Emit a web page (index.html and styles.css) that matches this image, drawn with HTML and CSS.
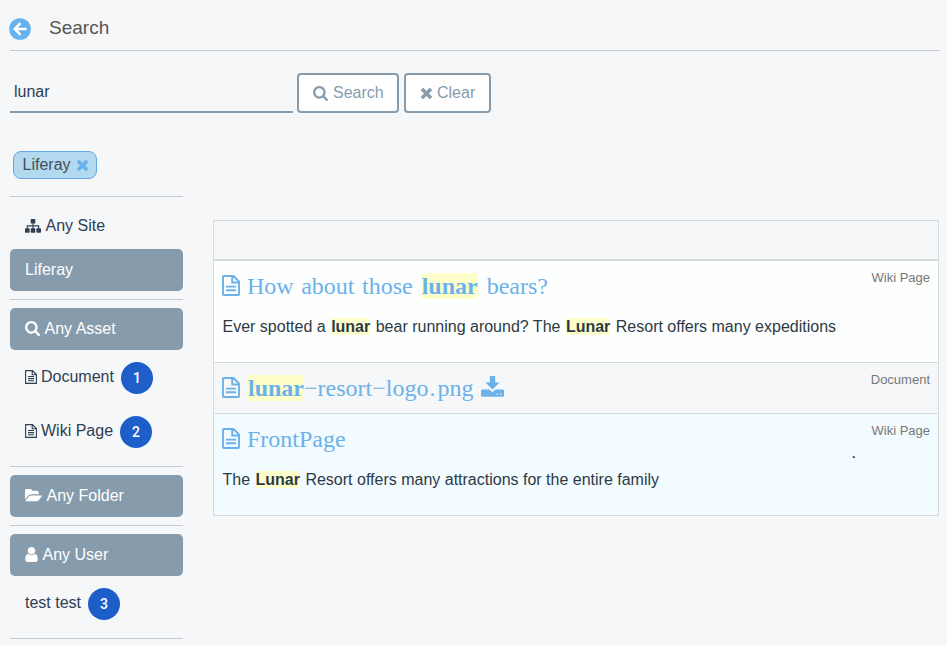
FILE: index.html
```html
<!DOCTYPE html>
<html lang="en">
<head>
<meta charset="utf-8">
<title>Search</title>
<link rel="stylesheet" href="styles.css">
</head>
<body>
<svg class="sprite" width="0" height="0" aria-hidden="true">
  <symbol id="search" viewBox="64 128 1664 1664"><path d="M1216 832q0-185-131.5-316.5t-316.5-131.5-316.5 131.5-131.5 316.5 131.5 316.5 316.5 131.5 316.5-131.5 131.5-316.5zm512 832q0 52-38 90t-90 38q-54 0-90-38l-343-342q-179 124-399 124-143 0-273.500-55.500t-225-150-150-225-55.500-273.500 55.500-273.500 150-225 225-150 273.500-55.500 273.500 55.500 225 150 150 225 55.500 273.500q0 220-124 399l343 343q37 37 37 90z"/></symbol>
  <symbol id="times" viewBox="302 366 1188 1188"><path d="M1490 1322q0 40-28 68l-136 136q-28 28-68 28t-68-28l-294-294-294 294q-28 28-68 28t-68-28l-136-136q-28-28-28-68t28-68l294-294-294-294q-28-28-28-68t28-68l136-136q28-28 68-28t68 28l294 294 294-294q28-28 68-28t68 28l136 136q28 28 28 68t-28 68l-294 294 294 294q28 28 28 68z"/></symbol>
  <symbol id="folder" viewBox="0 256 1880 1280"><path d="M1879 952q0 31-31 66l-336 396q-43 51-120.500 86.500t-143.500 35.500h-1088q-34 0-60.500-13t-26.500-43q0-31 31-66l336-396q43-51 120.500-86.500t143.500-35.500h1088q34 0 60.500 13t26.500 43zm-343-344v160h-832q-94 0-197 47.500t-164 119.500l-337 396-5 6q0-4-.5-12.500t-.5-12.500v-960q0-92 66-158t158-66h320q92 0 158 66t66 158v32h544q92 0 158 66t66 158z"/></symbol>
  <symbol id="user" viewBox="256 128 1280 1536"><path d="M1536 1399q0 109-62.500 187t-150.500 78h-854q-88 0-150.500-78t-62.500-187q0-85 8.500-160.500t31.500-152 58.500-131 94-89 134.500-34.500q131 128 313 128t313-128q76 0 134.500 34.500t94 89 58.500 131 31.500 152 8.500 160.500zm-256-887q0 159-112.500 271.500t-271.500 112.500-271.500-112.500-112.500-271.500 112.500-271.500 271.500-112.500 271.500 112.500 112.500 271.500z"/></symbol>
  <symbol id="file" viewBox="0 0 18 21"><path d="M1.800 1H11.500L17 6.500V19.200Q17 20 16.200 20H1.800Q1 20 1 19.200V1.800Q1 1 1.800 1ZM10.200 1V7.500H17M4 11.600H14M4 15.200H14" fill="none" stroke="currentColor" stroke-width="1.900"/></symbol>
  <symbol id="file-small" viewBox="0 0 12 14"><path d="M.6.600H7.500L11.400 4.500V13.400H.6ZM7.200.600V4.800H11.400M3 6.500H9M3 8.600H9M3 10.700H9" fill="none" stroke="currentColor" stroke-width="1.100"/></symbol>
  <symbol id="sitemap" viewBox="0 0 16 14"><rect x="5.700" y="0" width="4.600" height="4.600" rx=".7"/><rect x="0" y="9.200" width="4.600" height="4.600" rx=".7"/><rect x="5.700" y="9.200" width="4.600" height="4.600" rx=".7"/><rect x="11.400" y="9.200" width="4.600" height="4.600" rx=".7"/><path d="M8 4V10M2.300 10V6.900H13.700V10" fill="none" stroke="currentColor" stroke-width="1.100"/></symbol>
  <symbol id="download" viewBox="0 0 23 21"><path fill-rule="evenodd" d="M9.600 0H13.400Q14.200 0 14.200.8V6.400H18.500L11.500 13.600 4.500 6.400H8.800V.8Q8.800 0 9.600 0ZM1.400 13.400H8.400L11.500 16.200 14.600 13.400H21.600Q23 13.400 23 14.800V19.400Q23 20.800 21.600 20.800H1.400Q0 20.800 0 19.400V14.800Q0 13.400 1.400 13.400ZM15.800 17.400V18.800H17.200V17.400ZM19.200 17.400V18.800H20.600V17.400Z"/></symbol>
</svg>

<header class="page-head">
  <svg class="back" viewBox="0 0 22 22"><circle cx="11" cy="11" r="10.800"/><path d="M11.500 5.200L5.800 11L11.500 16.800M6.200 11H17.600"/></svg>
  <h1>Search</h1>
</header>

<form class="search-bar">
  <div class="query">lunar</div>
  <button type="button" class="btn btn-search"><svg class="i-search"><use href="#search"/></svg><span>Search</span></button>
  <button type="button" class="btn btn-clear"><svg class="i-times"><use href="#times"/></svg><span>Clear</span></button>
</form>

<div class="chip"><span>Liferay</span><svg class="i-times"><use href="#times"/></svg></div>

<main class="columns">
  <aside class="facets">
    <section>
      <div class="facet plain"><svg class="i-sitemap"><use href="#sitemap"/></svg><span>Any Site</span></div>
      <div class="facet active">Liferay</div>
    </section>
    <section>
      <div class="facet active"><svg class="i-search"><use href="#search"/></svg><span>Any Asset</span></div>
      <div class="term"><svg class="i-file-small"><use href="#file-small"/></svg><span>Document</span><b class="badge">1</b></div>
      <div class="term"><svg class="i-file-small"><use href="#file-small"/></svg><span>Wiki Page</span><b class="badge">2</b></div>
    </section>
    <section>
      <div class="facet active"><svg class="i-folder"><use href="#folder"/></svg><span>Any Folder</span></div>
    </section>
    <section>
      <div class="facet active"><svg class="i-user"><use href="#user"/></svg><span>Any User</span></div>
      <div class="term"><span>test test</span><b class="badge">3</b></div>
    </section>
  </aside>

  <div class="results">
    <div class="results-head"></div>
    <article class="result white">
      <div class="body">
        <h2><svg class="i-file"><use href="#file"/></svg><span class="t-bears">How about those <mark>lunar</mark> bears?</span></h2>
        <p>Ever spotted a <mark>lunar</mark> bear running around? The <mark>Lunar</mark> Resort offers many expeditions</p>
      </div>
      <div class="kind">Wiki Page</div>
    </article>
    <article class="result">
      <div class="body">
        <h2><svg class="i-file"><use href="#file"/></svg><span class="t-logo"><mark>lunar</mark>−resort−logo<span class="period">.</span>png</span><svg class="i-download"><use href="#download"/></svg></h2>
      </div>
      <div class="kind">Document</div>
    </article>
    <article class="result blue">
      <div class="body">
        <h2><svg class="i-file"><use href="#file"/></svg><span>FrontPage</span></h2>
        <p>The <mark>Lunar</mark> Resort offers many attractions for the entire family</p>
      </div>
      <div class="kind">Wiki Page<span class="dot">.</span></div>
    </article>
  </div>
</main>
</body>
</html>
```
FILE: styles.css
```css
* { box-sizing: border-box; }
body {
  margin: 0;
  padding: 0 7px 0 10px;
  height: 646px;
  overflow: hidden;
  background: #f5f7f9;
  color: #2f3e52;
  font: 16px/24px "Liberation Sans", Arial, sans-serif;
}
.sprite { position: absolute; }
svg { flex: none; fill: currentColor; display: block; }

.page-head {
  display: flex;
  align-items: center;
  height: 51px;
  padding-top: 5px;
  border-bottom: 1px solid #c5c9cd;
}
.back { width: 22px; height: 22px; margin: 2px 18px 0 -1px; }
.back circle { fill: #65b2ee; }
.back path { fill: none; stroke: #fff; stroke-width: 2.500; }
h1 { margin: 0; font-size: 19px; font-weight: 400; color: #555; }

.search-bar { display: flex; align-items: flex-start; padding-top: 22px; }
.query {
  width: 283px;
  height: 40px;
  margin-right: 4px;
  padding: 7px 4px;
  border-bottom: 2px solid #869cad;
}
.btn {
  display: flex;
  align-items: center;
  height: 40px;
  padding: 0;
  border: 2px solid #869cad;
  border-radius: 4px;
  background: #fff;
  color: #869cad;
  font: inherit;
}
.btn-search { width: 102px; margin-right: 5px; padding-left: 14px; gap: 5px; }
.btn-clear { width: 87px; padding-left: 15px; gap: 5px; }
.i-search { width: 15px; height: 15px; }
.i-times { width: 11px; height: 11px; margin-top: 0; }

.chip {
  display: flex;
  align-items: center;
  gap: 6px;
  width: 84px;
  height: 28px;
  margin: 38px 0 17px 3px;
  padding: 0 0 1px 8.500px;
  border: 1px solid #65a6ea;
  border-radius: 8px;
  background: #b2d9ee;
  color: #434f5b;
}
.chip svg { color: #65b2ee; margin-top: 2px; }

.columns { display: flex; align-items: flex-start; gap: 30px; }
.facets { width: 173px; border-bottom: 1px solid #c5c9cd; }
.facets section { border-top: 1px solid #c5c9cd; padding: 8px 0; }
.facet {
  display: flex;
  align-items: center;
  gap: 4.500px;
  height: 42px;
  padding: 0 15px;
  border-radius: 5px;
  line-height: 22px;
}
.facet.plain { height: 44px; padding-bottom: 3px; line-height: 24px; }
.facet.plain svg { margin-top: 0; }
.active { background: #869cad; color: #fff; }
.active svg { margin-top: -1px; }
.i-sitemap { width: 16px; height: 14px; }
.i-folder { width: 17px; height: 13px; }
.i-user { width: 13px; height: 15px; }
.i-file-small { width: 12px; height: 14px; margin-right: 4px; }
.term { display: flex; align-items: center; height: 54px; padding: 0 15px; }
.term span { margin-top: -1px; }
.term svg { margin-top: -1px; }
.badge {
  width: 32px;
  height: 32px;
  margin: 2px 0 0 7px;
  border-radius: 50%;
  background: #1d5ec9;
  color: #fff;
  font-family: Roboto, "Liberation Sans", sans-serif;
  font-size: 14px;
  font-weight: 500;
  line-height: 32px;
  text-align: center;
}

.results { width: 726px; margin-top: 24px; border: 1px solid #d7dadd; }
.results-head { height: 38px; }
.result {
  display: flex;
  justify-content: space-between;
  height: 51px;
  border-top: 1px solid #d7dadd;
  padding: 9px 8px 0;
}
.result.white { height: 103px; border-top-width: 2px; background: #fdfefe; }
.result.blue { height: 102px; background: #f2fbff; }
h2 {
  display: flex;
  align-items: center;
  height: 33px;
  margin: 0;
  color: #6bb2ea;
  font: 400 24px/33px "Liberation Serif", "Times New Roman", serif;
}
.i-file { width: 18px; height: 21px; margin: -2px 7px 0 0; }
.i-download { width: 23px; height: 21px; margin: -5px 0 0 8px; }
mark { background: #fefecb; color: inherit; font-weight: 700; }
.t-bears { word-spacing: 1.500px; }
.t-bears mark { margin: 0 1.500px; }
.t-logo mark { margin-left: 1px; }
.period { letter-spacing: 2px; margin-left: 1px; }
p { margin: 12px 0 0; padding-left: .5px; line-height: 24px; white-space: nowrap; color: #2d3a45; }
p mark { margin: 0 1px; }
.kind { position: relative; font-size: 13px; line-height: 16px; color: #777; }
.dot { position: absolute; right: 74px; top: 22px; font-size: 16px; line-height: 16px; color: #111; }
```
